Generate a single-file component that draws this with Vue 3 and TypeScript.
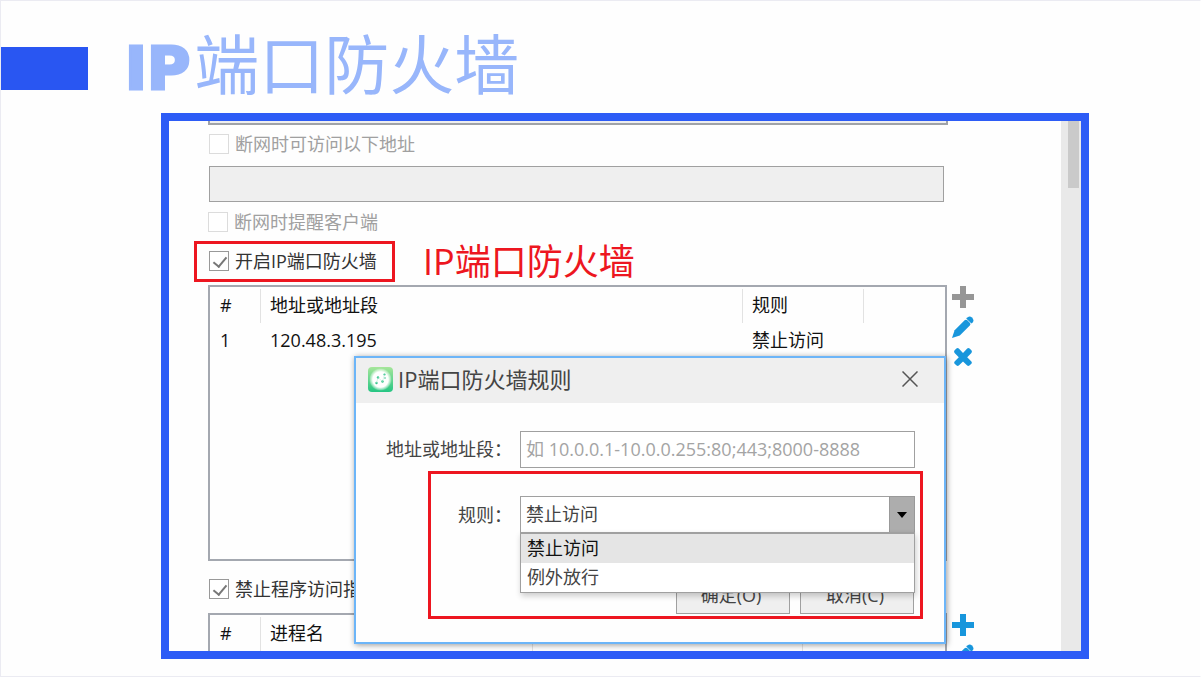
<script setup lang="ts">
import { ref } from 'vue'

interface Rule {
  id: number
  address: string
  action: string
}

const rules: Rule[] = [{ id: 1, address: '120.48.3.195', action: '禁止访问' }]
const options: string[] = ['禁止访问', '例外放行']

const allowAddresses = ref(false)
const offlineNotice = ref(false)
const firewallEnabled = ref(true)
const blockPrograms = ref(true)
const allowedList = ref('')
const address = ref('')
const action = ref(options[0])
</script>

<template>
  <main class="slide">
    <header class="heading">
      <span class="marker"></span>
      <h1 class="title"><span class="latin">IP</span>端口防火墙</h1>
    </header>

    <section class="frame">
      <div class="content">
        <div class="previous"></div>

        <label class="check disabled first">
          <input v-model="allowAddresses" type="checkbox" disabled />断网时可访问以下地址
        </label>
        <input v-model="allowedList" class="allowed" type="text" aria-label="断网时可访问以下地址" disabled />
        <label class="check disabled second">
          <input v-model="offlineNotice" type="checkbox" disabled />断网时提醒客户端
        </label>

        <div class="firewall">
          <label class="check marked">
            <input v-model="firewallEnabled" type="checkbox" />开启IP端口防火墙
          </label>
          <strong class="note">IP端口防火墙</strong>
        </div>

        <div class="listing">
          <div class="grid-box rules">
            <table>
              <colgroup>
                <col class="c-index" />
                <col />
                <col class="c-rule" />
                <col class="c-rest" />
              </colgroup>
              <thead>
                <tr>
                  <th><span>#</span></th>
                  <th><span>地址或地址段</span></th>
                  <th><span>规则</span></th>
                  <th><span></span></th>
                </tr>
              </thead>
              <tbody>
                <tr v-for="rule in rules" :key="rule.id">
                  <td>{{ rule.id }}</td>
                  <td>{{ rule.address }}</td>
                  <td>{{ rule.action }}</td>
                  <td></td>
                </tr>
              </tbody>
            </table>
          </div>
          <div class="tools">
            <button type="button" class="tool muted" aria-label="添加">
              <svg viewBox="0 0 22 22"><path d="M8 0h6v8h8v6h-8v8H8v-8H0V8h8z" /></svg>
            </button>
            <button type="button" class="tool" aria-label="编辑">
              <svg viewBox="0 0 22 22">
                <path d="M0 22 2.6 14.2 12.6 4.2Q14 3 15.6 4.5L18 7Q19 8.3 17.8 9.6L7.8 19.4Z" />
                <path d="M14.2 2.6 15.8 1.2Q17.8-.4 20 1.6 22.4 4 20.8 6.2L19.4 7.6Z" />
              </svg>
            </button>
            <button type="button" class="tool" aria-label="删除">
              <svg viewBox="0 0 22 22">
                <path d="M4.4 2.6Q5.6 1.6 6.8 2.6L11 6.9 15.2 2.6Q16.4 1.6 17.6 2.6L19.6 4.6Q20.4 5.8 19.4 7L15.2 11.2 19.4 15.4Q20.4 16.6 19.4 17.8L17.4 19.6Q16.2 20.4 15.2 19.5L11 15.4 6.8 19.5Q5.8 20.4 4.6 19.6L2.6 17.8Q1.6 16.6 2.6 15.4L6.8 11.2 2.6 7Q1.6 5.8 2.4 4.6Z" />
              </svg>
            </button>
          </div>
        </div>

        <label class="check third">
          <input v-model="blockPrograms" type="checkbox" />禁止程序访问指
        </label>

        <div class="listing">
          <div class="grid-box programs">
            <table>
              <colgroup>
                <col class="c-index" />
                <col class="c-name" />
                <col />
                <col class="c-last" />
              </colgroup>
              <thead>
                <tr>
                  <th><span>#</span></th>
                  <th><span>进程名</span></th>
                  <th><span></span></th>
                  <th><span></span></th>
                </tr>
              </thead>
            </table>
          </div>
          <div class="tools">
            <button type="button" class="tool" aria-label="添加程序">
              <svg viewBox="0 0 22 22"><path d="M8 0h6v8h8v6h-8v8H8v-8H0V8h8z" /></svg>
            </button>
            <button type="button" class="tool" aria-label="编辑程序">
              <svg viewBox="0 0 22 22">
                <path d="M0 22 2.6 14.2 12.6 4.2Q14 3 15.6 4.5L18 7Q19 8.3 17.8 9.6L7.8 19.4Z" />
                <path d="M14.2 2.6 15.8 1.2Q17.8-.4 20 1.6 22.4 4 20.8 6.2L19.4 7.6Z" />
              </svg>
            </button>
          </div>
        </div>
      </div>

      <div class="scrollbar"><div class="thumb"></div></div>

      <div class="dialog" role="dialog" aria-labelledby="dialog-title">
        <div class="dialog-head">
          <svg class="logo" viewBox="0 0 25 25">
            <defs>
              <linearGradient id="logo-fill" x1="0" y1="0" x2="0" y2="1">
                <stop offset="0" stop-color="#a6e69a" />
                <stop offset="1" stop-color="#25c583" />
              </linearGradient>
              <radialGradient id="logo-glow">
                <stop offset="0.7" stop-color="#fff" />
                <stop offset="1" stop-color="#fff" stop-opacity="0.15" />
              </radialGradient>
            </defs>
            <rect width="25" height="25" rx="4" fill="url(#logo-fill)" />
            <circle cx="12.5" cy="12.5" r="11" fill="url(#logo-glow)" />
            <g fill="#35c58d">
              <circle cx="10" cy="10.5" r="1.2" />
              <circle cx="16.5" cy="7.5" r="1.1" />
              <circle cx="8.5" cy="16" r="1.2" />
              <circle cx="14.5" cy="14.5" r="1.2" />
              <circle cx="17" cy="11" r="0.8" />
            </g>
            <path d="M8.5 16 10 10.5 14.5 14.5 16.5 7.5" fill="none" stroke="#b5ead2" stroke-width="0.5" />
          </svg>
          <h2 id="dialog-title">IP端口防火墙规则</h2>
          <button type="button" class="close" aria-label="关闭">
            <svg viewBox="0 0 16 16"><path d="M.5.5l15 15M15.500.5l-15 15" /></svg>
          </button>
        </div>

        <div class="field">
          <label for="address">地址或地址段：</label>
          <input id="address" v-model="address" type="text" placeholder="如 10.0.0.1-10.0.0.255:80;443;8000-8888" />
        </div>

        <div class="highlight">
          <div class="field">
            <label for="action">规则：</label>
            <div class="combo">
              <select id="action" v-model="action">
                <option v-for="option in options" :key="option">{{ option }}</option>
              </select>
              <span class="arrow"></span>
              <ul class="menu" role="listbox">
                <li
                  v-for="option in options"
                  :key="option"
                  role="option"
                  :aria-selected="option === action"
                  :class="{ selected: option === action }"
                  @click="action = option"
                >
                  {{ option }}
                </li>
              </ul>
            </div>
          </div>
          <div class="actions">
            <button type="button">确定(O)</button>
            <button type="button">取消(C)</button>
          </div>
        </div>
      </div>
    </section>
  </main>
</template>

<style>
body {
  margin: 0;
  background: #fff;
}
</style>

<style scoped>
* {
  box-sizing: border-box;
}

.slide {
  display: flex;
  flex-direction: column;
  height: 100vh;
  padding: 0 111px 17px 160px;
  overflow: hidden;
  border: 1px solid #ebebf2;
  border-right-color: #fff;
  background: #fefefe;
  color: #111;
  font: 18px/24px "Open Sans", "Noto Sans CJK SC", sans-serif;
}

.heading {
  display: flex;
  flex: none;
  align-items: flex-start;
  gap: 37px;
  height: 112px;
  margin-left: -160px;
}

.marker {
  width: 87px;
  height: 43px;
  margin-top: 46px;
  background: #2956f2;
}

.title {
  margin: 0;
  padding-top: 24px;
  color: #98b6fb;
  font: 400 65px/72px "Noto Sans CJK SC", sans-serif;
  white-space: nowrap;
}

.latin {
  margin-right: 4px;
  font-family: "DejaVu Sans", sans-serif;
  font-size: 59px;
  font-weight: 700;
  -webkit-text-stroke: 3px #98b6fb;
}

.frame {
  position: relative;
  display: flex;
  flex: 1;
  min-height: 0;
  overflow: hidden;
  border: 8px solid #2d5cf6;
}

.content {
  display: flex;
  flex: 1;
  flex-direction: column;
  padding: 0 87px 0 39px;
}

.previous {
  flex: none;
  height: 4px;
  margin-right: 26px;
  border: 2px solid #a0a3a8;
  border-top: 0;
  background: #efefef;
}

.check {
  display: flex;
  align-items: center;
  flex: none;
  gap: 6px;
  height: 24px;
  color: #333;
  white-space: nowrap;
}

.check input {
  position: relative;
  flex: none;
  width: 20px;
  height: 20px;
  margin: 0;
  appearance: none;
  border: 1px solid #999;
  background: #fff;
}

.check input:checked::after {
  content: "";
  position: absolute;
  top: 2px;
  left: 6px;
  width: 6px;
  height: 11px;
  border: solid #777;
  border-width: 0 2px 2px 0;
  rotate: 40deg;
}

.check.disabled {
  color: #a0a0a0;
}

.check.disabled input {
  border-color: #dcdcdc;
}

.first {
  margin: 7px 0 10px 1px;
}

.allowed {
  flex: none;
  height: 36px;
  margin: 0 30px 0 1px;
  border: 1px solid #a0a0a0;
  background: #efefef;
}

.second {
  margin-top: 8px;
}

.firewall {
  display: flex;
  flex: none;
  align-items: center;
  gap: 28px;
  height: 41px;
  margin: 7px 0 3px -14px;
}

.marked {
  width: 201px;
  height: 41px;
  padding: 0 0 2px 12px;
  border: 3px solid #ed1620;
}

.note {
  color: #ed1620;
  font-size: 36px;
  font-weight: 400;
  line-height: 40px;
  white-space: nowrap;
}

.listing {
  display: flex;
  flex: none;
  gap: 5px;
}

.grid-box {
  flex: 1;
  overflow: hidden;
  border: 2px solid #a4a8b0;
  background: #fefefe;
}

.rules {
  height: 276px;
}

.programs {
  height: 120px;
}

table {
  width: 100%;
  table-layout: fixed;
  border-collapse: collapse;
}

.c-index {
  width: 50px;
}

.c-rule {
  width: 121px;
}

.c-rest {
  width: 82px;
}

.c-name {
  width: 272px;
}

.c-last {
  width: 143px;
}

th,
td {
  height: 34px;
  padding: 0 0 0 10px;
  font-weight: 400;
  text-align: left;
  white-space: nowrap;
}

th {
  height: 36px;
  padding: 2px 0 0;
}

th span {
  display: block;
  height: 34px;
  padding-left: 9px;
  border-left: 1px solid #e2e2e2;
  line-height: 32px;
}

th:first-child span {
  border-left-color: transparent;
}

.tools {
  display: flex;
  flex-direction: column;
  width: 22px;
  padding-top: 1px;
  gap: 8px;
}

.tool {
  width: 22px;
  height: 22px;
  padding: 0;
  border: 0;
  background: none;
  color: #1896dc;
}

.tool.muted {
  color: #969696;
}

.tool svg {
  display: block;
  width: 22px;
  height: 22px;
  fill: currentColor;
}

.third {
  margin: 16px 0 12px 1px;
}

.scrollbar {
  flex: none;
  width: 20px;
  background: #e9e9e9;
}

.thumb {
  width: 11px;
  height: 67px;
  margin-left: 7px;
  background: #cacaca;
}

.dialog {
  position: absolute;
  top: 235px;
  right: 135px;
  left: 185px;
  height: 288px;
  border: 2px solid #6cb5f8;
  background: #fefefe;
  box-shadow: 1px 1px 6px rgb(0 0 0 / 40%);
  color: #444;
}

.dialog-head {
  display: flex;
  align-items: center;
  height: 45px;
  padding: 0 26px 3px 12px;
  background: #efefef;
}

.logo {
  width: 25px;
  height: 25px;
}

h2 {
  flex: 1;
  margin: 0 0 0 5px;
  font-size: 22px;
  font-weight: 400;
  line-height: 32px;
}

.close {
  width: 16px;
  height: 16px;
  padding: 0;
  border: 0;
  background: none;
}

.close svg {
  display: block;
  width: 16px;
  height: 16px;
  fill: none;
  stroke: #555;
  stroke-width: 1.5;
}

.field {
  display: flex;
  align-items: center;
}

.dialog > .field {
  margin: 28px 29px 3px 0;
}

.field label {
  flex: none;
  width: 164px;
  padding: 0 8px 2px 0;
  text-align: right;
}

.field input,
select {
  flex: 1;
  width: 100%;
  min-width: 0;
  height: 37px;
  padding: 0 5px 2px;
  border: 1px solid #a0a0a0;
  border-radius: 0;
  outline: 0;
  appearance: none;
  background: #fff;
  color: #444;
  font: inherit;
}

.field input::placeholder {
  color: #a4a4a4;
  opacity: 1;
}

.highlight {
  height: 148px;
  margin: 0 21px 0 72px;
  padding: 22px 5px 0 0;
  border: 3px solid #ed1620;
}

.highlight label {
  width: 89px;
  padding-bottom: 0;
}

.combo {
  position: relative;
  display: flex;
  flex: 1;
}

.arrow {
  position: absolute;
  top: 0;
  right: 0;
  display: grid;
  place-items: center;
  width: 26px;
  height: 37px;
  border: 1px solid #999;
  background: #adadad;
  pointer-events: none;
}

.arrow::after {
  content: "";
  border: 5px solid transparent;
  border-top: 6px solid #000;
  border-bottom: 0;
}

.menu {
  position: absolute;
  top: 36px;
  right: 0;
  left: 0;
  margin: 0;
  padding: 0;
  border: 1px solid #a0a0a0;
  border-top-width: 2px;
  background: #fff;
  box-shadow: 1px 3px 6px rgb(0 0 0 / 20%);
  list-style: none;
}

.menu li {
  height: 29px;
  padding-left: 6px;
  line-height: 28px;
}

.menu .selected {
  background: #e5e5e5;
  color: #111;
}

.actions {
  display: flex;
  justify-content: flex-end;
  gap: 10px;
  padding: 44px 1px 0 0;
}

.actions button {
  width: 114px;
  height: 37px;
  padding: 0 4px 2px 0;
  border: 1px solid #a0a0a0;
  background: #efefef;
  color: #444;
  font: inherit;
}
</style>
